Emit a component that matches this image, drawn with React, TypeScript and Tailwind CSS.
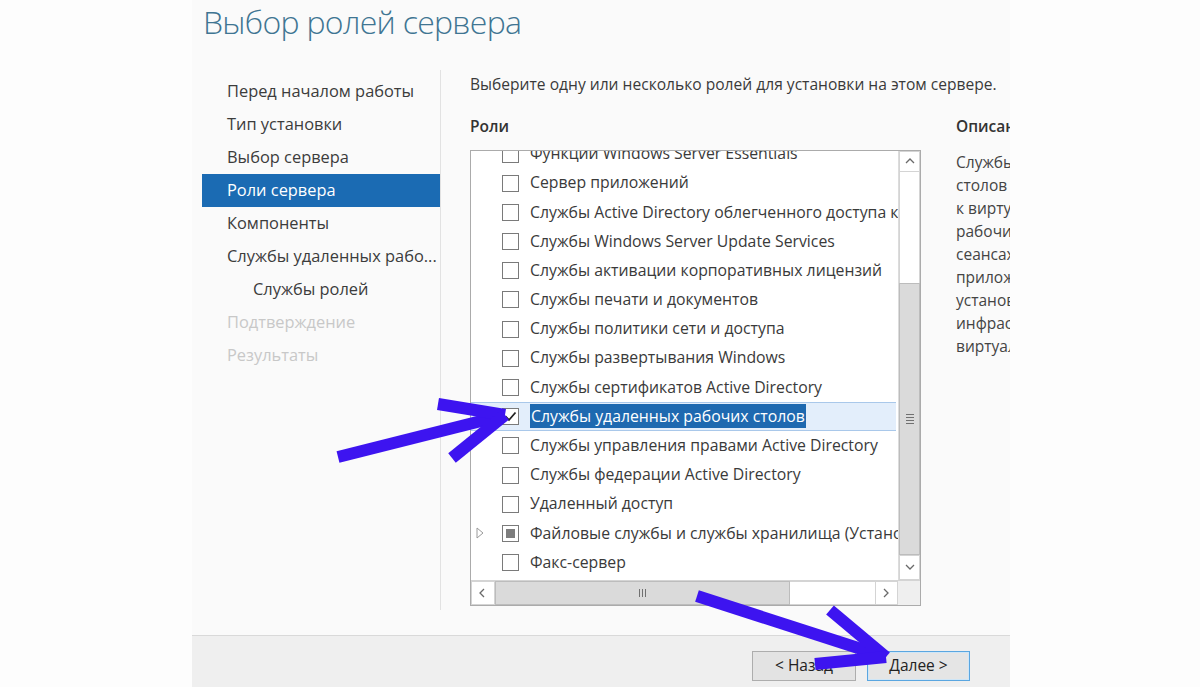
import React from "react";

const navItems: { label: string; state: "normal" | "active" | "disabled"; indent?: boolean }[] = [
  { label: "Перед началом работы", state: "normal" },
  { label: "Тип установки", state: "normal" },
  { label: "Выбор сервера", state: "normal" },
  { label: "Роли сервера", state: "active" },
  { label: "Компоненты", state: "normal" },
  { label: "Службы удаленных рабо...", state: "normal" },
  { label: "Службы ролей", state: "normal", indent: true },
  { label: "Подтверждение", state: "disabled" },
  { label: "Результаты", state: "disabled" },
];

type Row = { label: string; kind?: "checked" | "partial"; selected?: boolean; expander?: boolean };

const rows: Row[] = [
  { label: "Функции Windows Server Essentials" },
  { label: "Сервер приложений" },
  { label: "Службы Active Directory облегченного доступа к каталогам" },
  { label: "Службы Windows Server Update Services" },
  { label: "Службы активации корпоративных лицензий" },
  { label: "Службы печати и документов" },
  { label: "Службы политики сети и доступа" },
  { label: "Службы развертывания Windows" },
  { label: "Службы сертификатов Active Directory" },
  { label: "Службы удаленных рабочих столов", kind: "checked", selected: true },
  { label: "Службы управления правами Active Directory" },
  { label: "Службы федерации Active Directory" },
  { label: "Удаленный доступ" },
  { label: "Файловые службы и службы хранилища (Установлено 2 из 12)", kind: "partial", expander: true },
  { label: "Факс-сервер" },
];

const descLines = [
  "Службы удаленных рабочих",
  "столов обеспечивают доступ",
  "к виртуальным рабочим",
  "рабочим столам на основе",
  "сеансах и удаленным",
  "приложениям RemoteApp.",
  "установите для развертывания",
  "инфраструктуры",
  "виртуальных рабочих столов.",
];

function Checkbox({ kind }: { kind?: "checked" | "partial" }) {
  return (
    <div className="w-[17px] h-[17px] border border-[#7a7a7a] bg-white flex items-center justify-center shrink-0">
      {kind === "checked" && (
        <svg width="13" height="11" viewBox="0 0 13 11">
          <polyline points="1.5,5.5 5,9 11.5,1.5" fill="none" stroke="#222" strokeWidth="1.8" />
        </svg>
      )}
      {kind === "partial" && <div className="w-[9px] h-[9px] bg-[#7d7d7d]" />}
    </div>
  );
}

function Chevron({ dir }: { dir: "up" | "down" | "left" | "right" }) {
  const pts =
    dir === "up"
      ? "1,6 5,2 9,6"
      : dir === "down"
      ? "1,2 5,6 9,2"
      : dir === "left"
      ? "6,1 2,5 6,9"
      : "2,1 6,5 2,9";
  return (
    <svg width="10" height="10" viewBox="0 0 10 10">
      <polyline points={pts} fill="none" stroke="#6a6a6a" strokeWidth="1.3" />
    </svg>
  );
}

export default function App() {
  return (
    <div className="relative w-[1200px] h-[687px] overflow-hidden bg-[#fdfdfd] flex font-['Open_Sans',sans-serif] text-[#3a3a3a]">
      <div className="w-[192px] shrink-0" />
      <div className="w-[818px] shrink-0 flex flex-col bg-[#fafafa] overflow-hidden">
        {/* Main area */}
        <div className="h-[635px] flex flex-col">
          <div className="h-[70px] shrink-0 pl-[11px] pt-[6px]">
            <div className="text-[32px] leading-[32px] font-light text-[#3f7592] tracking-[-0.7px] whitespace-nowrap">
              Выбор ролей сервера
            </div>
          </div>
          <div className="flex flex-1 min-h-0">
            {/* Nav */}
            <div className="w-[248px] shrink-0 pl-[10px] pt-[5px]">
              {navItems.map((n) => (
                <div
                  key={n.label}
                  className={
                    "h-[33px] flex items-center text-[16.4px] whitespace-nowrap " +
                    (n.indent ? "pl-[51px] " : "pl-[25px] ") +
                    (n.state === "active"
                      ? "bg-[#1b6bb3] text-white"
                      : n.state === "disabled"
                      ? "text-[#c8c8c8]"
                      : "text-[#3c3c3c]")
                  }
                >
                  {n.label}
                </div>
              ))}
            </div>
            <div className="w-px bg-[#e2e2e2] shrink-0 mb-[25px]" />
            {/* Content */}
            <div className="flex-1 pl-[29px] flex flex-col min-w-0">
              <div className="mt-[4px] h-[20px] leading-[20px] text-[15.6px] text-[#3a3a3a] whitespace-nowrap">
                Выберите одну или несколько ролей для установки на этом сервере.
              </div>
              <div className="flex gap-[35px] mt-[22px]">
                <div className="w-[451px] shrink-0">
                  <div className="h-[20px] leading-[20px] text-[15.5px] font-semibold text-[#333]">Роли</div>
                  {/* Listbox */}
                  <div className="mt-[14px] w-[451px] h-[456px] border border-[#ababab] bg-white flex flex-col">
                    <div className="flex h-[429px]">
                      <div className="w-[427px] h-full overflow-hidden relative">
                        <div className="mt-[-11.6px]">
                          {rows.map((r, i) => (
                            <div
                              key={i}
                              className={
                                "h-[29.2px] flex items-center whitespace-nowrap relative " +
                                (r.selected ? "bg-[#e3eefb] border-y border-[#a9c8ea] mr-[2px]" : "")
                              }
                            >
                              <div className="w-[31px] shrink-0 flex items-center pl-[5px]">
                                {r.expander && (
                                  <svg width="8" height="12" viewBox="0 0 8 12">
                                    <polygon points="1,1 7,6 1,11" fill="none" stroke="#9a9a9a" strokeWidth="1" />
                                  </svg>
                                )}
                              </div>
                              <Checkbox kind={r.kind} />
                              <div className="ml-[11px] text-[15.8px]">
                                <span
                                  className={
                                    r.selected
                                      ? "bg-[#1e69b0] text-white px-[1px] py-[1px]"
                                      : "text-[#3a3a3a]"
                                  }
                                >
                                  {r.label}
                                </span>
                              </div>
                            </div>
                          ))}
                        </div>
                      </div>
                      {/* Vertical scrollbar */}
                      <div className="w-[22px] h-full flex flex-col border-l border-[#dcdcdc] bg-white">
                        <div className="h-[21px] border border-[#d4d4d4] flex items-center justify-center">
                          <Chevron dir="up" />
                        </div>
                        <div className="h-[111px] border-x border-[#d4d4d4]" />
                        <div className="h-[272px] bg-[#dadada] border border-[#bcbcbc] flex items-center justify-center">
                          <div className="flex flex-col gap-[2px]">
                            <div className="w-[8px] h-px bg-[#707070]" />
                            <div className="w-[8px] h-px bg-[#707070]" />
                            <div className="w-[8px] h-px bg-[#707070]" />
                            <div className="w-[8px] h-px bg-[#707070]" />
                          </div>
                        </div>
                        <div className="flex-1 border border-[#d4d4d4] flex items-center justify-center">
                          <Chevron dir="down" />
                        </div>
                      </div>
                    </div>
                    {/* Horizontal scrollbar */}
                    <div className="flex h-[25px] border-t border-[#d4d4d4]">
                      <div className="w-[24px] border border-[#d4d4d4] flex items-center justify-center bg-white">
                        <Chevron dir="left" />
                      </div>
                      <div className="w-[295px] bg-[#dadada] border border-[#bcbcbc] flex items-center justify-center">
                        <div className="flex gap-[2px]">
                          <div className="w-px h-[8px] bg-[#707070]" />
                          <div className="w-px h-[8px] bg-[#707070]" />
                          <div className="w-px h-[8px] bg-[#707070]" />
                        </div>
                      </div>
                      <div className="w-[85px] bg-white border-y border-[#d4d4d4]" />
                      <div className="w-[23px] border border-[#d4d4d4] flex items-center justify-center bg-white">
                        <Chevron dir="right" />
                      </div>
                      <div className="flex-1 bg-[#efefef]" />
                    </div>
                  </div>
                </div>
                {/* Description */}
                <div className="shrink-0 w-[200px]">
                  <div className="h-[20px] leading-[20px] text-[15.5px] font-semibold text-[#333]">Описание</div>
                  <div className="mt-[15px]">
                    {descLines.map((l) => (
                      <div key={l} className="h-[23px] leading-[23px] text-[15.5px] text-[#444] whitespace-nowrap">
                        {l}
                      </div>
                    ))}
                  </div>
                </div>
              </div>
            </div>
          </div>
        </div>
        {/* Footer */}
        <div className="flex-1 border-t border-[#d9d9d9] bg-[#efefef] flex justify-end items-start pt-[15px] pr-[40px] gap-[11px]">
          <button className="w-[104px] h-[30px] border border-[#adadad] bg-[#e3e3e3] text-[15.5px] text-[#222] flex items-center justify-center">
            &lt; Назад
          </button>
          <button className="w-[103px] h-[30px] border border-[#5aa6e0] bg-[#e5e5e5] text-[15.5px] text-[#222] flex items-center justify-center shadow-[inset_0_0_0_1px_#cfe6f7]">
            Далее &gt;
          </button>
        </div>
      </div>
      <div className="flex-1" />

      {/* Annotation arrows */}
      <svg className="absolute inset-0 pointer-events-none" width="1200" height="687" viewBox="0 0 1200 687">
        <g stroke="#3d14f0" strokeWidth="12" fill="none" strokeLinecap="butt" strokeLinejoin="miter">
          <line x1="338" y1="457" x2="505" y2="415" />
          <line x1="438" y1="404" x2="505" y2="415" />
          <line x1="452" y1="458" x2="505" y2="415" />
          <line x1="697" y1="596" x2="886" y2="657" />
          <line x1="830" y1="610" x2="886" y2="657" />
          <line x1="815" y1="664" x2="886" y2="657" />
        </g>
      </svg>
    </div>
  );
}
